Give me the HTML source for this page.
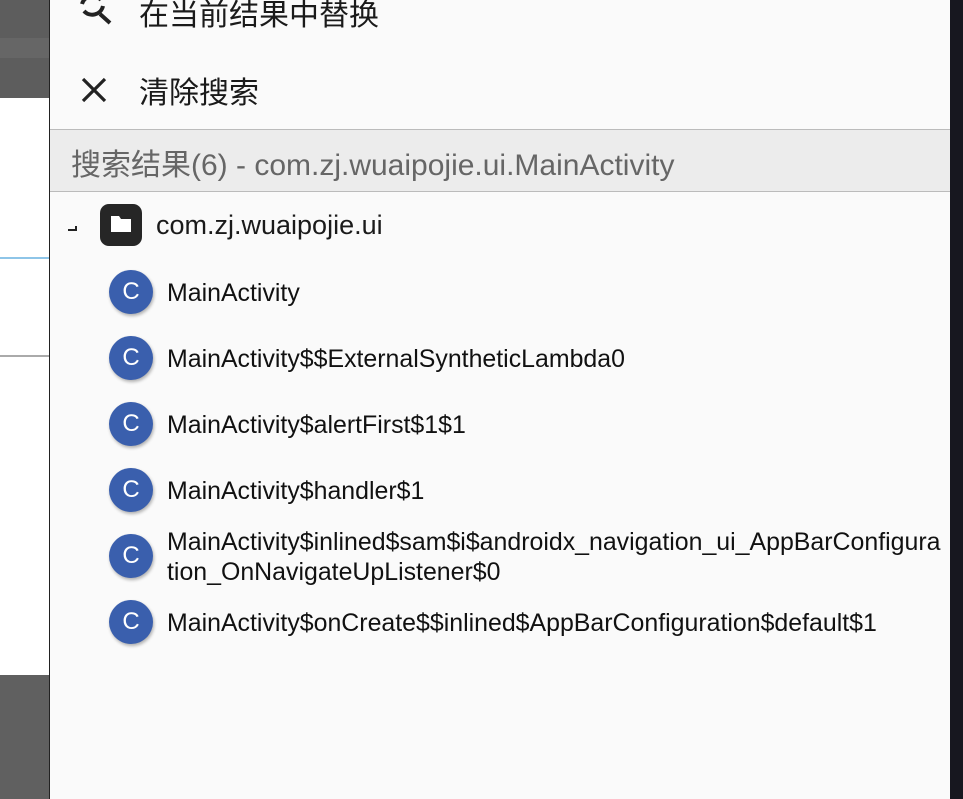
<!DOCTYPE html>
<html><head><meta charset="utf-8"><style>
*{margin:0;padding:0;box-sizing:border-box}
body{width:963px;height:799px;overflow:hidden;position:relative;background:#606060;font-family:"Liberation Sans","Noto Sans CJK SC",sans-serif}
.a{position:absolute}
.t{color:#1a1a1a;font-size:22px;white-space:nowrap}
.c{position:absolute;left:109px;width:44px;height:44px;border-radius:50%;background:#3a5fad;color:#fff;font-size:24px;text-align:center;line-height:44px;box-shadow:1px 2px 3px rgba(0,0,0,.3)}
.n{position:absolute;left:167px;font-size:24.9px;color:#111;white-space:nowrap;line-height:30px}
</style></head><body>
<div class="a" style="left:0;top:0;width:49px;height:98px;background:#5d5d5d"></div>
<div class="a" style="left:0;top:38px;width:49px;height:20px;background:#666"></div>
<div class="a" style="left:0;top:98px;width:49px;height:577px;background:#fff"></div>
<div class="a" style="left:0;top:257px;width:49px;height:2px;background:#8ec5e8"></div>
<div class="a" style="left:0;top:355px;width:49px;height:2px;background:#aaa"></div>
<div class="a" style="left:49px;top:0;width:901px;height:799px;background:#fafafa;border-left:1px solid #222"></div>
<div class="a" style="left:950px;top:0;width:13px;height:799px;background:#17171f"></div>
<svg class="a" style="left:76px;top:-6px" width="38" height="34" viewBox="0 0 38 34"><path d="M6 10a11 11 0 0 1 19-4M27 12a11 11 0 0 1-19 5" fill="none" stroke="#222" stroke-width="4"/><path d="M24 20l10 9" stroke="#222" stroke-width="4"/></svg>
<div class="a t" style="left:139px;top:-10px;font-size:30px">在当前结果中替换</div>
<svg class="a" style="left:80px;top:76px" width="28" height="28"><path d="M3 3L25 25M25 3L3 25" stroke="#222" stroke-width="3.2"/></svg>
<div class="a t" style="left:139px;top:68px;font-size:30px">清除搜索</div>
<div class="a" style="left:50px;top:129px;width:900px;height:63px;background:#ececec;border-top:1px solid #bbb;border-bottom:1px solid #bbb"></div>
<div class="a" style="left:71px;top:140px;font-size:30px;color:#666;white-space:nowrap">搜索结果(6) - com.zj.wuaipojie.ui.MainActivity</div>
<div class="a" style="left:68px;top:226px;width:9px;height:5px;border-right:2px solid #222;border-bottom:2px solid #222"></div>
<div class="a" style="left:100px;top:204px;width:42px;height:42px;border-radius:9px;background:#262626"></div>
<svg class="a" style="left:110px;top:214px" width="22" height="20"><path d="M1 2h8l2 3h10v13H1z" fill="#fff"/></svg>
<div class="a t" style="left:156px;top:210px;font-size:27px">com.zj.wuaipojie.ui</div>
<div class="c" style="top:270px">C</div><div class="n" style="top:278px">MainActivity</div>
<div class="c" style="top:336px">C</div><div class="n" style="top:344px">MainActivity$$ExternalSyntheticLambda0</div>
<div class="c" style="top:402px">C</div><div class="n" style="top:410px">MainActivity$alertFirst$1$1</div>
<div class="c" style="top:468px">C</div><div class="n" style="top:476px">MainActivity$handler$1</div>
<div class="c" style="top:534px">C</div><div class="n" style="top:527px">MainActivity$inlined$sam$i$androidx_navigation_ui_AppBarConfigura<br>tion_OnNavigateUpListener$0</div>
<div class="c" style="top:600px">C</div><div class="n" style="top:608px">MainActivity$onCreate$$inlined$AppBarConfiguration$default$1</div>
</body></html>
